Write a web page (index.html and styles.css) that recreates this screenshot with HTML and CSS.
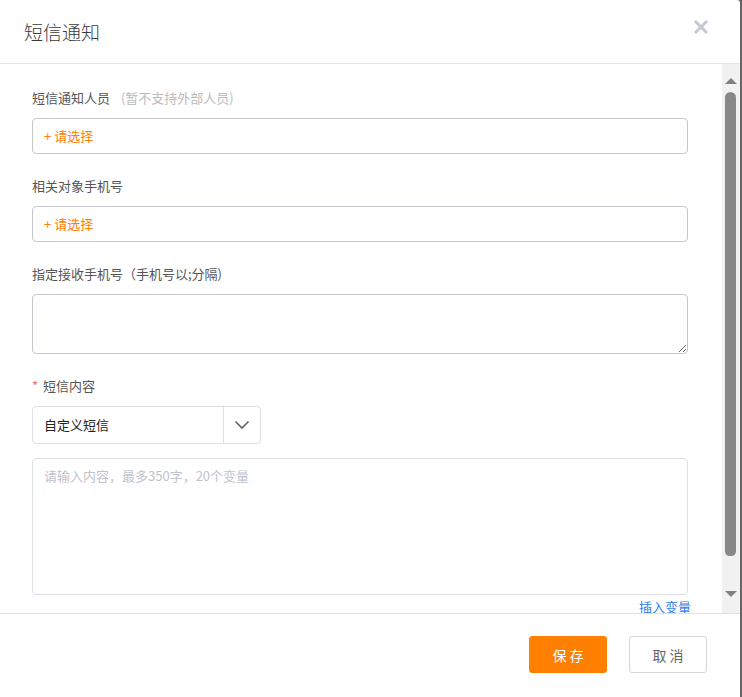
FILE: index.html
```html
<!DOCTYPE html>
<html lang="zh">
<head>
<meta charset="utf-8">
<title>短信通知</title>
<link rel="stylesheet" href="styles.css">
</head>
<body>
<div class="dialog">
  <div class="dlg-header">
    <div class="dlg-title">短信通知</div>
    <svg class="dlg-close" width="16" height="16" viewBox="0 0 16 16"><path d="M2 2 L14 14 M14 2 L2 14" stroke="#c4c8d0" stroke-width="3" stroke-linecap="butt"/></svg>
  </div>
  <div class="dlg-body">
    <div class="content">
      <div class="form-item">
        <div class="label">短信通知人员 <span class="hint">(暂不支持外部人员)</span></div>
        <div class="picker">+&nbsp;请选择</div>
      </div>
      <div class="form-item">
        <div class="label">相关对象手机号</div>
        <div class="picker">+&nbsp;请选择</div>
      </div>
      <div class="form-item">
        <div class="label">指定接收手机号（手机号以;分隔)</div>
        <textarea class="phones"></textarea>
      </div>
      <div class="form-item tight">
        <div class="label"><span class="req">*</span>短信内容</div>
        <div class="select">
          <div class="select-text">自定义短信</div>
          <div class="select-arrow">
            <svg width="16" height="10" viewBox="0 0 16 10"><path d="M1.5 1.5 L8 8 L14.5 1.5" fill="none" stroke="#5f6470" stroke-width="1.6"/></svg>
          </div>
        </div>
      </div>
      <div class="msg-box">
        <div class="placeholder">请输入内容，最多350字，20个变量</div>
      </div>
      <div class="insert-row"><span class="insert">插入变量</span></div>
    </div>
    <div class="scrollbar">
      <div class="arrow-up"></div>
      <div class="thumb"></div>
      <div class="spacer"></div>
      <div class="arrow-down"></div>
    </div>
  </div>
  <div class="dlg-footer">
    <button class="btn btn-primary">保存</button>
    <button class="btn btn-default">取消</button>
  </div>
</div>
</body>
</html>
```

FILE: styles.css
```css
html, body {
  margin: 0;
  padding: 0;
  height: 100%;
  overflow: hidden;
}
body {
  background: #666;
  font-family: "Noto Sans CJK SC", "Noto Sans", "Liberation Sans", sans-serif;
  font-size: 14px;
  color: #333;
}
.dialog {
  width: 740px;
  height: 697px;
  background: #fff;
  display: flex;
  flex-direction: column;
  border-top-right-radius: 3px;
}
.dlg-header {
  height: 63px;
  border-bottom: 1px solid #e4e4e4;
  display: flex;
  align-items: flex-start;
  justify-content: space-between;
  padding: 0 31px 0 24px;
  flex-shrink: 0;
}
.dlg-title {
  font-size: 19px;
  line-height: 28px;
  margin-top: 18px;
  color: #3a3a3a;
  font-weight: 300;
}
.dlg-close {
  margin-top: 19px;
}
.dlg-body {
  flex: 1;
  display: flex;
  min-height: 0;
}
.content {
  flex: 1;
  overflow: hidden;
  padding: 24px 34px 0 32px;
}
.form-item {
  margin-bottom: 22px;
}
.form-item.tight {
  margin-bottom: 14px;
}
.label {
  height: 20px;
  line-height: 20px;
  font-size: 13px;
  color: #555;
  margin-bottom: 10px;
}
.hint {
  color: #bbb;
  margin-left: 8px;
}
.req {
  color: #f56c6c;
  margin-right: 5px;
}
.picker {
  height: 34px;
  border: 1px solid #c4c6cc;
  border-radius: 4px;
  line-height: 34px;
  padding-left: 11px;
  color: #ff8000;
  font-size: 13px;
}
.phones {
  display: block;
  box-sizing: border-box;
  width: 100%;
  height: 60px;
  border: 1px solid #c4c6cc;
  border-radius: 4px;
  resize: vertical;
  font-family: inherit;
  margin: 0;
  outline: none;
}
.select {
  width: 227px;
  height: 36px;
  border: 1px solid #dcdfe6;
  border-radius: 4px;
  display: flex;
}
.select-text {
  flex: 1;
  line-height: 36px;
  padding-left: 11px;
  font-size: 13px;
  color: #222;
}
.select-arrow {
  width: 36px;
  border-left: 1px solid #dcdfe6;
  display: flex;
  align-items: center;
  justify-content: center;
}
.msg-box {
  border: 1px solid #dcdfe6;
  border-radius: 4px;
  padding: 7px 11px;
  box-sizing: border-box;
  height: 137px;
}
.placeholder {
  color: #c0c4cc;
  font-size: 13px;
  line-height: 20px;
}
.insert-row {
  display: flex;
  justify-content: flex-end;
  margin-right: -3px;
  margin-top: 2px;
}
.insert {
  color: #2b7de9;
  font-size: 13px;
  line-height: 20px;
}
.scrollbar {
  width: 18px;
  background: #f1f1f1;
  display: flex;
  flex-direction: column;
  align-items: center;
  padding: 14px 0 14px 0;
  box-sizing: border-box;
  flex-shrink: 0;
}
.arrow-up {
  width: 0;
  height: 0;
  border-left: 6px solid transparent;
  border-right: 6px solid transparent;
  border-bottom: 6px solid #808080;
  margin-left: -1px;
}
.thumb {
  width: 11px;
  height: 464px;
  margin-top: 8px;
  margin-left: -1px;
  background: #888;
  border-radius: 6px 6px 5px 5px;
}
.spacer {
  flex: 1;
}
.arrow-down {
  width: 0;
  height: 0;
  border-left: 6px solid transparent;
  border-right: 6px solid transparent;
  border-top: 6px solid #808080;
  margin-left: -1px;
  margin-bottom: 2px;
}
.dlg-footer {
  height: 84px;
  box-sizing: border-box;
  border-top: 1px solid #e0e0e0;
  display: flex;
  justify-content: flex-end;
  align-items: flex-start;
  padding: 22px 33px 0 0;
  gap: 22px;
  flex-shrink: 0;
}
.btn {
  width: 78px;
  height: 37px;
  border-radius: 3px;
  font-family: inherit;
  font-size: 14px;
  letter-spacing: 3px;
  text-indent: 3px;
  cursor: pointer;
  padding: 0;
}
.btn-primary {
  background: #ff8000;
  border: 1px solid #ff8000;
  color: #fff;
}
.btn-default {
  background: #fff;
  border: 1px solid #d4d6da;
  color: #666;
}
```
